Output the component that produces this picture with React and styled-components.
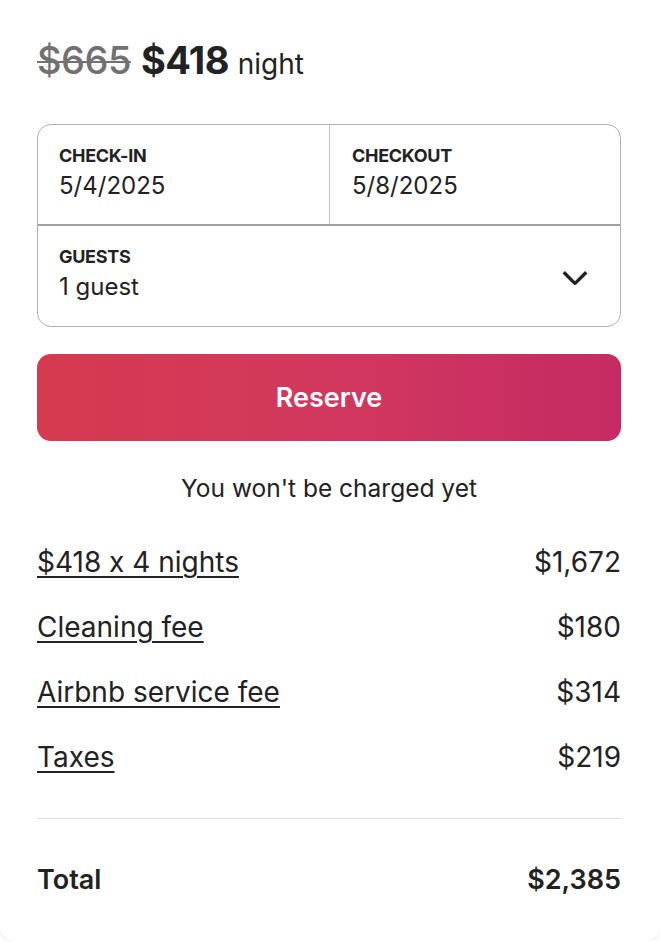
import React from 'react'
import styled, {createGlobalStyle} from "styled-components";

const GlobalStyle = createGlobalStyle`
  html, body {
    margin: 0;
    padding: 0;
    background: #ffffff;
  }
  body {
    font-family: Inter, "Noto Sans", "Liberation Sans", sans-serif;
    font-feature-settings: "calt" 0;
    color: #222222;
    -webkit-font-smoothing: antialiased;
  }
`;

const lines = [
    {label: "$418 x 4 nights", amount: "$1,672"},
    {label: "Cleaning fee", amount: "$180"},
    {label: "Airbnb service fee", amount: "$314"},
    {label: "Taxes", amount: "$219"},
];

export default function App() {
    return (
        <>
            <GlobalStyle/>
            <Card>
                <PriceLine>
                    <OldPrice>$665</OldPrice>
                    <NewPrice>$418</NewPrice>
                    <Per>night</Per>
                </PriceLine>

                <Picker>
                    <DatesRow>
                        <Field>
                            <Label>CHECK-IN</Label>
                            <Value>5/4/2025</Value>
                        </Field>
                        <Field $divider>
                            <Label>CHECKOUT</Label>
                            <Value>5/8/2025</Value>
                        </Field>
                    </DatesRow>
                    <GuestsRow>
                        <Field $bottom>
                            <Label>GUESTS</Label>
                            <Value>1 guest</Value>
                        </Field>
                        <Chevron viewBox="0 0 32 32" aria-hidden="true">
                            <path d="M28 12 16.7 23.3a1 1 0 0 1-1.4 0L4 12"/>
                        </Chevron>
                    </GuestsRow>
                </Picker>

                <ReserveButton>Reserve</ReserveButton>
                <Note>You won't be charged yet</Note>

                <Breakdown>
                    {lines.map(l => (
                        <Row key={l.label}>
                            <LineLabel>{l.label}</LineLabel>
                            <span>{l.amount}</span>
                        </Row>
                    ))}
                </Breakdown>

                <Divider/>

                <TotalRow>
                    <span>Total</span>
                    <span>$2,385</span>
                </TotalRow>
            </Card>
        </>
    );
}

const Card = styled.div`
  box-sizing: border-box;
  width: 660px;
  height: 940px;
  padding: 38px 39px 0 37px;
  background: #fff;
  border-radius: 0 0 14px 14px;
  box-shadow: 0 2px 6px rgba(0, 0, 0, 0.08);
  display: flex;
  flex-direction: column;
`;

const PriceLine = styled.div`
  display: flex;
  align-items: baseline;
  gap: 10px;
  height: 44px;
  line-height: 44px;
`;

const OldPrice = styled.span`
  font-size: 38px;
  font-weight: 500;
  color: #717171;
  text-decoration: line-through;
  text-decoration-thickness: 2px;
  letter-spacing: -0.5px;
`;

const NewPrice = styled.span`
  font-size: 38px;
  font-weight: 700;
  color: #222;
  letter-spacing: -0.6px;
`;

const Per = styled.span`
  font-size: 28px;
  font-weight: 400;
  margin-left: -1px;
`;

const Picker = styled.div`
  margin-top: 42px;
  border: 1px solid #b0b0b0;
  border-radius: 14px;
  display: flex;
  flex-direction: column;
`;

const DatesRow = styled.div`
  display: grid;
  grid-template-columns: 291px 1fr;
  border-bottom: 2px solid #a0a0a0;
`;

const GuestsRow = styled.div`
  display: flex;
  align-items: center;
  justify-content: space-between;
  padding-right: 30px;
`;

const Field = styled.div`
  display: flex;
  flex-direction: column;
  gap: 4px;
  padding: 20px 21px ${p => p.$bottom ? "24px" : "23px"} 21px;
  border-left: ${p => p.$divider ? "1px solid #c4c4c4" : "none"};
  padding-left: ${p => p.$divider ? "22px" : "21px"};
`;

const Label = styled.div`
  font-size: 18px;
  line-height: 22px;
  font-weight: 700;
  letter-spacing: -0.3px;
  color: #222;
`;

const Value = styled.div`
  font-size: 24px;
  line-height: 30px;
  font-weight: 400;
  color: #222;
`;

const Chevron = styled.svg`
  width: 30px;
  height: 30px;
  fill: none;
  stroke: #222;
  stroke-width: 3.6;
  overflow: visible;
`;

const ReserveButton = styled.button`
  margin-top: 27px;
  height: 87px;
  border: none;
  border-radius: 14px;
  background: linear-gradient(to right, #d53a4f 0%, #d2385e 50%, #c52a63 100%);
  color: #fff;
  font-family: inherit;
  font-size: 27px;
  font-weight: 600;
  cursor: pointer;
`;

const Note = styled.div`
  margin-top: 32px;
  text-align: center;
  font-size: 24.5px;
  line-height: 30px;
`;

const Breakdown = styled.div`
  margin-top: 42px;
  display: flex;
  flex-direction: column;
  gap: 31px;
`;

const Row = styled.div`
  display: flex;
  justify-content: space-between;
  font-size: 28px;
  line-height: 34px;
  color: #222;
`;

const LineLabel = styled.span`
  text-decoration: underline;
  text-decoration-thickness: 1.5px;
  text-underline-offset: 4px;
`;

const Divider = styled.hr`
  margin: 44px 0 0;
  border: none;
  border-top: 1px solid #dddddd;
`;

const TotalRow = styled.div`
  margin-top: 44px;
  display: flex;
  justify-content: space-between;
  font-size: 27px;
  line-height: 34px;
  font-weight: 600;
`;
